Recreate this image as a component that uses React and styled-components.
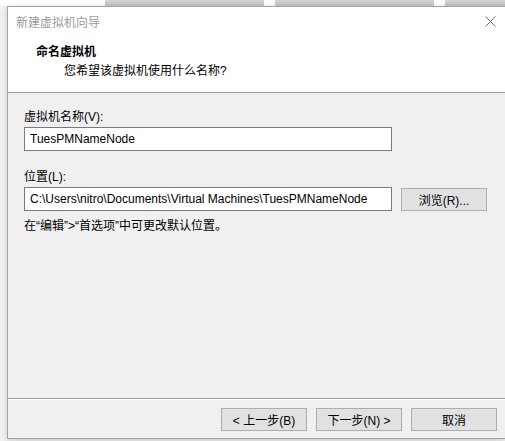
import React from 'react'
import styled, { createGlobalStyle } from 'styled-components'

const Global = createGlobalStyle`
  html, body {
    margin: 0;
    padding: 0;
    width: 505px;
    height: 441px;
    overflow: hidden;
    background: #f4f4f4;
  }
  * { box-sizing: border-box; }
`

const Desktop = styled.div`
  width: 505px;
  height: 441px;
  display: flex;
  flex-direction: column;
  font-family: "Liberation Sans", "Noto Sans CJK SC", sans-serif;
  font-size: 12px;
  color: #000;
`

const Backdrop = styled.div`
  height: 6px;
  display: flex;
  background: #fff;
  padding-left: 105px;
  gap: 11px;
`

const Tab = styled.div`
  width: ${p => p.w}px;
  height: 6px;
  background: linear-gradient(#d6d6d6, #c2c2c2);
`

const Window = styled.div`
  margin-left: 7px;
  width: 498px;
  height: 433px;
  border: 1px solid #a3a3a3;
  border-right: none;
  background: #f0f0f0;
  box-shadow: 0 2px 8px rgba(0, 0, 0, 0.18);
  display: flex;
  flex-direction: column;
`

const Header = styled.div`
  height: 86px;
  background: #fff;
  border-bottom: 1px solid #a0a0a0;
  display: flex;
  flex-direction: column;
`

const TitleBar = styled.div`
  height: 29px;
  display: flex;
  align-items: center;
  justify-content: space-between;
  padding: 0 9px 0 8px;
  color: #9a9a9a;
`

const Close = styled.svg`
  width: 11px;
  height: 11px;
`

const Heading = styled.div`
  font-weight: bold;
  margin: 8px 0 0 28px;
  line-height: 16px;
`

const SubHeading = styled.div`
  margin: 3px 0 0 56px;
  line-height: 16px;
`

const Body = styled.div`
  flex: 1;
  padding: 16px 0 0 16px;
  display: flex;
  flex-direction: column;
`

const Label = styled.div`
  line-height: 16px;
  margin-top: ${p => p.top || 0}px;
`

const Row = styled.div`
  display: flex;
  align-items: center;
  margin-top: 2px;
  gap: 9px;
`

const Field = styled.div`
  width: 368px;
  height: 24px;
  background: #fff;
  border: 1px solid #7a7a7a;
  padding-left: 5px;
  display: flex;
  align-items: center;
  white-space: nowrap;
  overflow: hidden;
`

const Button = styled.div`
  width: 86px;
  height: 23px;
  background: #e1e1e1;
  border: 1px solid #adadad;
  display: flex;
  align-items: center;
  justify-content: center;
  white-space: nowrap;
`

const Hint = styled.div`
  margin-top: 7px;
  line-height: 16px;
`

const Footer = styled.div`
  height: 40px;
  border-top: 1px solid #a0a0a0;
  box-shadow: inset 0 1px 0 #fff;
  display: flex;
  justify-content: flex-end;
  align-items: flex-start;
  padding: 9px 8px 0 0;
  gap: 9px;
`

export default function App() {
  return (
    <Desktop>
      <Global />
      <Backdrop>
        <Tab w={159} />
        <Tab w={160} />
        <Tab w={60} />
      </Backdrop>
      <Window>
        <Header>
          <TitleBar>
            <span>新建虚拟机向导</span>
            <Close viewBox="0 0 11 11">
              <path d="M0.5 0.5 L10.5 10.5 M10.5 0.5 L0.5 10.5" stroke="#6f6f6f" strokeWidth="1" fill="none" />
            </Close>
          </TitleBar>
          <Heading>命名虚拟机</Heading>
          <SubHeading>您希望该虚拟机使用什么名称?</SubHeading>
        </Header>
        <Body>
          <Label>虚拟机名称(V):</Label>
          <Row>
            <Field>TuesPMNameNode</Field>
          </Row>
          <Label top={18}>位置(L):</Label>
          <Row>
            <Field>C:\Users\nitro\Documents\Virtual Machines\TuesPMNameNode</Field>
            <Button>浏览(R)...</Button>
          </Row>
          <Hint>在“编辑”&gt;“首选项”中可更改默认位置。</Hint>
        </Body>
        <Footer>
          <Button>&lt; 上一步(B)</Button>
          <Button>下一步(N) &gt;</Button>
          <Button>取消</Button>
        </Footer>
      </Window>
    </Desktop>
  )
}
